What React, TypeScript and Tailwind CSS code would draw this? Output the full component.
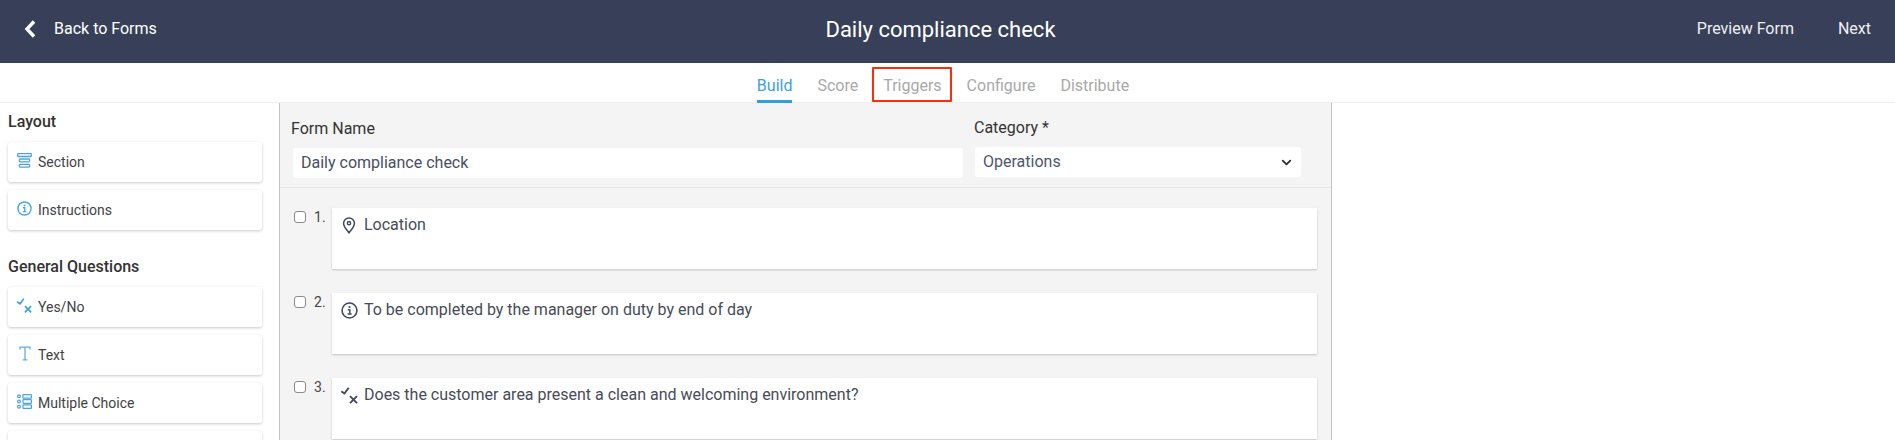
import { ChevronDown } from "lucide-react";

function SectionIcon() {
  return (
    <svg width="15" height="15" viewBox="0 0 15 15" fill="none" stroke="#4aa5e6" strokeWidth="1.3">
      <rect x="0.7" y="0.7" width="13.6" height="2.8" rx="0.5" />
      <rect x="2.3" y="6" width="10.4" height="2.8" rx="1" />
      <rect x="2.3" y="11.3" width="10.4" height="2.8" rx="1" />
    </svg>
  );
}

function InfoIcon({ color, size }: { color: string; size: number }) {
  return (
    <svg width={size} height={size} viewBox="0 0 16 16" fill="none" stroke={color} strokeWidth="1.5">
      <circle cx="8" cy="8" r="7" />
      <circle cx="8" cy="4.7" r="1" fill={color} stroke="none" />
      <path d="M6.4 7.2H8.3V11.3M6.2 11.4H10" strokeWidth="1.4" />
    </svg>
  );
}

function YesNoIcon({ color, size }: { color: string; size: number }) {
  return (
    <svg width={size} height={size} viewBox="0 0 17 17" fill="none" stroke={color} strokeWidth="1.9">
      <path d="M0.3 4.3L3.5 6.5L7.7 0.7" />
      <path d="M9 9.2L16 16.2M16 9.2L9 16.2" />
    </svg>
  );
}

function TextIcon() {
  return (
    <svg width="16" height="16" viewBox="0 0 16 16" fill="none" stroke="#5fb0ea" strokeWidth="1.3">
      <path d="M3 3.6V1.2H13V3.6M8 1.2V13.6M5.6 13.8H10.4" />
    </svg>
  );
}

function ChoiceIcon() {
  return (
    <svg width="15" height="15" viewBox="0 0 15 15" fill="none" stroke="#4aa5e6" strokeWidth="1.2">
      <circle cx="2" cy="2.2" r="1.4" />
      <circle cx="2" cy="7.5" r="1.4" />
      <circle cx="2" cy="12.8" r="1.4" />
      <rect x="6" y="0.6" width="8.4" height="3.6" rx="0.5" />
      <rect x="6" y="5.7" width="8.4" height="3.6" rx="0.5" />
      <rect x="6" y="10.8" width="8.4" height="3.6" rx="0.5" />
    </svg>
  );
}

function PinIcon() {
  return (
    <svg width="14" height="17" viewBox="0 0 14 17" fill="none" stroke="#414a5e" strokeWidth="1.5">
      <path d="M7 15.8C4.6 12.6 1.6 9.8 1.6 6.4a5.4 5.4 0 0 1 10.8 0C12.4 9.8 9.4 12.6 7 15.8Z" />
      <circle cx="7" cy="6.2" r="1.6" />
    </svg>
  );
}

function PaletteItem({ icon, label }: { icon: React.ReactNode; label: string }) {
  return (
    <div className="flex h-10 items-center rounded-[3px] bg-white pl-[9px] text-sm text-[#3f4246] shadow-[0_1px_3px_rgba(0,0,0,0.22)]">
      <span className="mb-[3px] w-[21px]">{icon}</span>
      <span className="leading-none">{label}</span>
    </div>
  );
}

function Question({ n, icon, text }: { n: number; icon: React.ReactNode; text: string }) {
  return (
    <div className="flex">
      <div className="flex w-[40px] items-start">
        <input type="checkbox" className="ml-[2px] mt-[3px] h-[12px] w-[12px] appearance-none rounded-[3px] border border-[#8a8a8a] bg-white" />
        <span className="ml-[8px] text-[14px] leading-[18px] text-[#444]">{n}.</span>
      </div>
      <div className="flex h-[61px] w-[985px] items-start bg-white pl-[9px] pt-[8px] shadow-[0_1px_2px_rgba(0,0,0,0.2)]">
        <span className="flex h-[18px] w-[23px] shrink-0 items-center justify-start">{icon}</span>
        <span className="text-[16px] leading-[18px] text-[#474c57]">{text}</span>
      </div>
    </div>
  );
}

export default function App() {
  const tabs = ["Build", "Score", "Triggers", "Configure", "Distribute"];

  return (
    <div className="h-[440px] overflow-hidden bg-white font-['Roboto',sans-serif] antialiased">
      {/* Header */}
      <header className="flex h-[63px] items-center justify-between bg-[#383f58] pb-[5px] text-white">
        <div className="flex w-[400px] items-center pl-[24px]">
          <svg width="12" height="18" viewBox="0 0 12 18" fill="none" stroke="white" strokeWidth="3.4">
            <path d="M10 1.5L3 9L10 16.5" />
          </svg>
          <span className="ml-[18px] text-[16px]">Back to Forms</span>
        </div>
        <h1 className="ml-[-14px] text-[22px]">Daily compliance check</h1>
        <div className="flex w-[400px] items-center justify-end gap-[44px] pr-[24px] text-[16px] leading-none text-[#f0f0f4]">
          <span>Preview Form</span>
          <span>Next</span>
        </div>
      </header>

      {/* Tabs */}
      <nav className="flex h-[40px] justify-center gap-[25px] border-b border-[#eeeeee] pr-[9px] text-[16px] text-[#a9a9a9]">
        {tabs.map((tab, i) => (
          <div
            key={tab}
            className={`relative flex h-[40px] items-center ${i === 0 ? "border-b-[3px] border-[#2f9fe0] pt-[8px] text-[#3d9fe0]" : "pt-[5px]"}`}
          >
            {tab}
            {tab === "Triggers" && (
              <span className="absolute -left-[11px] -right-[10px] top-[4px] bottom-[1px] rounded-[1px] border-2 border-[#fb2c10]" />
            )}
          </div>
        ))}
      </nav>

      <div className="flex">
        {/* Palette */}
        <aside className="w-[280px] shrink-0 border-r border-[#c4c4c4] pl-[8px] pr-[17px]">
          <h2 className="mt-[10px] text-[16px] leading-[18px] font-medium text-[#333]">Layout</h2>
          <div className="mt-[11px] flex flex-col gap-2">
            <PaletteItem icon={<SectionIcon />} label="Section" />
            <PaletteItem icon={<InfoIcon color="#4aa5e6" size={15} />} label="Instructions" />
          </div>
          <h2 className="mt-[28px] text-[16px] leading-[18px] font-medium text-[#333]">General Questions</h2>
          <div className="mt-[11px] flex flex-col gap-2">
            <PaletteItem icon={<YesNoIcon color="#3f9fe3" size={15} />} label="Yes/No" />
            <PaletteItem icon={<TextIcon />} label="Text" />
            <PaletteItem icon={<ChoiceIcon />} label="Multiple Choice" />
            <PaletteItem icon={null} label="" />
          </div>
        </aside>

        {/* Form */}
        <main className="h-[340px] w-[1052px] shrink-0 border-r border-[#c4c4c4] bg-[#f4f4f4]">
          <div className="flex h-[85px] border-b border-[#e9e9e9] pl-[12px] text-[16px] text-[#333]">
            <div className="w-[671px]">
              <div className="-ml-px mt-[17px] leading-[18px]">Form Name</div>
              <div className="ml-[1px] mt-[10px] flex h-[30px] w-[670px] items-center rounded-[3px] bg-white pl-[8px] text-[#474f63]">
                Daily compliance check
              </div>
            </div>
            <div className="ml-[11px]">
              <div className="mt-[16px] leading-[18px]">Category *</div>
              <div className="ml-[1px] mt-[10px] flex h-[30px] w-[326px] items-center justify-between rounded-[3px] bg-white pl-[8px] pr-[7px] text-[#4c566f]">
                Operations
                <ChevronDown size={15} strokeWidth={3} className="text-[#333]" />
              </div>
            </div>
          </div>
          <div className="flex flex-col gap-[24px] pl-[12px] pt-[20px]">
            <Question n={1} icon={<span className="ml-[1px] flex"><PinIcon /></span>} text="Location" />
            <Question n={2} icon={<InfoIcon color="#414a5e" size={17} />} text="To be completed by the manager on duty by end of day" />
            <Question n={3} icon={<YesNoIcon color="#414a5e" size={17} />} text="Does the customer area present a clean and welcoming environment?" />
          </div>
        </main>
      </div>
    </div>
  );
}
